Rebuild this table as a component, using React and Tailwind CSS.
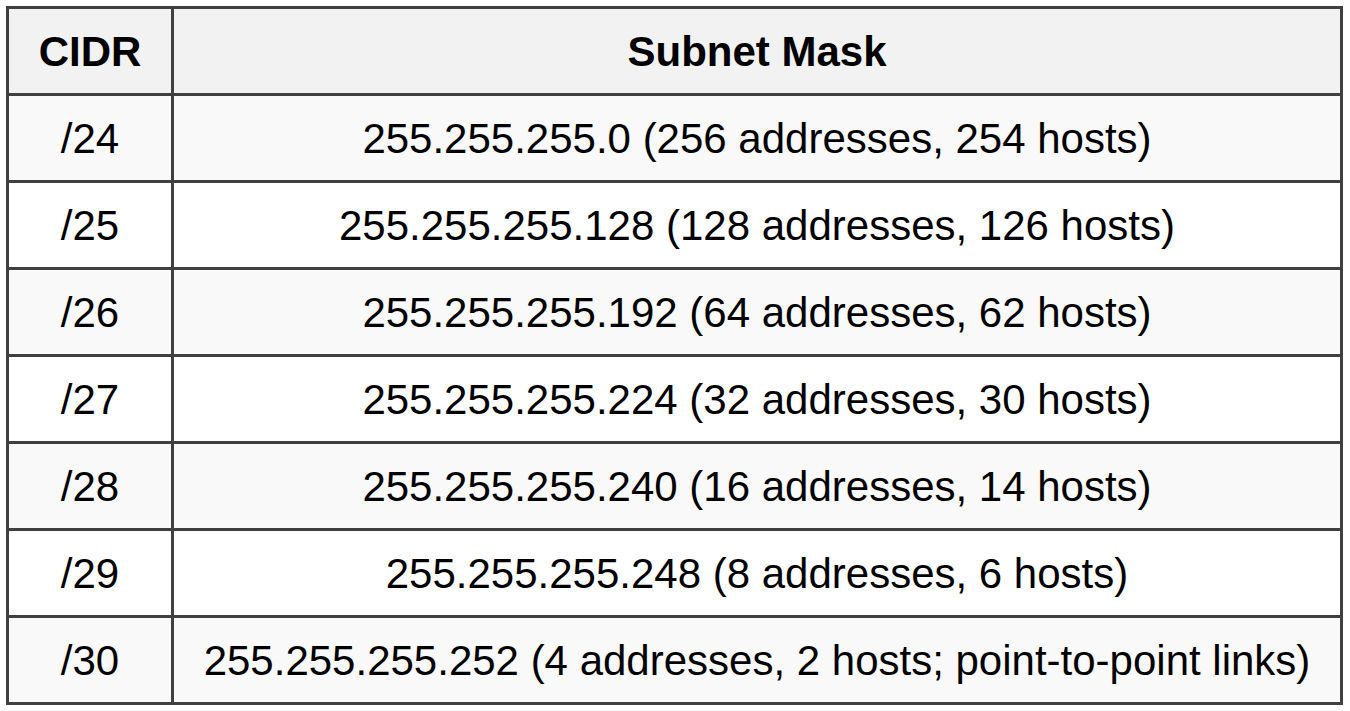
export default function App() {
  const rows = [
    ["/24", "255.255.255.0 (256 addresses, 254 hosts)"],
    ["/25", "255.255.255.128 (128 addresses, 126 hosts)"],
    ["/26", "255.255.255.192 (64 addresses, 62 hosts)"],
    ["/27", "255.255.255.224 (32 addresses, 30 hosts)"],
    ["/28", "255.255.255.240 (16 addresses, 14 hosts)"],
    ["/29", "255.255.255.248 (8 addresses, 6 hosts)"],
    ["/30", "255.255.255.252 (4 addresses, 2 hosts; point-to-point links)"],
  ];
  return (
    <div className="w-[1350px] h-[711px] bg-white pt-[6px] pl-[6px]" style={{ fontFamily: '"Liberation Sans", Arial, sans-serif' }}>
      <div className="w-[1337px] bg-[#404040] p-[3px] grid grid-cols-[162px_1166px] auto-rows-[84px] gap-[3px] text-black">
        <div className="bg-[#f2f2f2] flex items-center justify-center text-[42px] font-bold">CIDR</div>
        <div className="bg-[#f2f2f2] flex items-center justify-center text-[42px] font-bold">Subnet Mask</div>
        {rows.map(([c, m], i) => {
          const bg = i % 2 === 0 ? "bg-[#f9f9f9]" : "bg-white";
          return [
            <div key={c + "a"} className={`${bg} flex items-center justify-center text-[42px]`}>{c}</div>,
            <div key={c + "b"} className={`${bg} flex items-center justify-center text-[42px] whitespace-nowrap`}>{m}</div>,
          ];
        })}
      </div>
    </div>
  );
}
